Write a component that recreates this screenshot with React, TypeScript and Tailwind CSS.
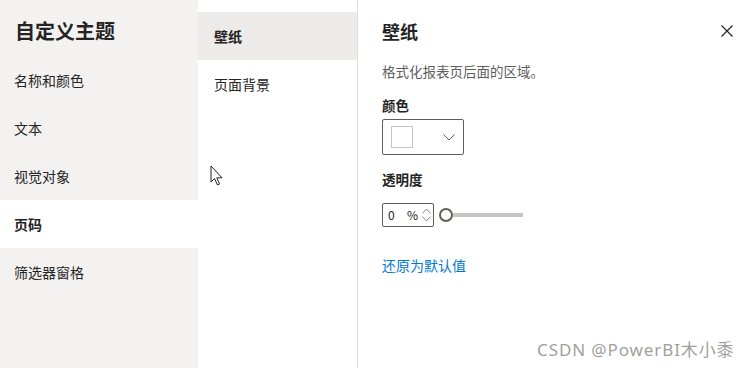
import React from "react";

const font = { fontFamily: '"Noto Sans CJK SC", "Noto Sans", sans-serif' };

export default function App() {
  const items = ["名称和颜色", "文本", "视觉对象", "页码", "筛选器窗格"];
  return (
    <div
      className="relative flex w-[748px] h-[368px] overflow-hidden bg-white text-[#252423]"
      style={font}
    >
      {/* Left nav */}
      <div className="w-[198px] h-full bg-[#f3f2f1] flex flex-col">
        <div className="h-[56px] pt-[6px] pl-[15px] flex items-center text-[20px] font-bold leading-none">
          自定义主题
        </div>
        {items.map((t) => (
          <div
            key={t}
            className={
              "h-[48px] pl-[14px] flex items-center text-[14px] leading-none " +
              (t === "页码" ? "bg-white font-bold" : "")
            }
          >
            {t}
          </div>
        ))}
      </div>

      {/* Middle */}
      <div className="w-[160px] h-full border-r border-[#e1dfdd] pt-[12px] flex flex-col">
        <div className="h-[48px] bg-[#edebe9] pl-[16px] flex items-center text-[14px] font-bold leading-none">
          壁纸
        </div>
        <div className="h-[48px] pl-[16px] flex items-center text-[14px] leading-none">
          页面背景
        </div>
      </div>

      {/* Right */}
      <div className="flex-1 h-full pl-[24px] pr-[15px] flex flex-col">
        <div className="h-[62px] flex items-center justify-between">
          <span className="text-[18px] font-bold leading-none">壁纸</span>
          <svg width="12" height="12" viewBox="0 0 12 12">
            <path d="M0.5 0.5 L11.5 11.5 M11.5 0.5 L0.5 11.5" stroke="#252423" strokeWidth="1.2" />
          </svg>
        </div>
        <div className="h-[18px] leading-[18px] text-[13.5px] text-[#605e5c]">
          格式化报表页后面的区域。
        </div>
        <div className="mt-[15px] h-[20px] leading-[20px] text-[13.5px] font-bold">颜色</div>
        <div className="mt-[4px] w-[82px] h-[36px] border border-[#605e5c] rounded-[2px] flex items-center pl-[8px] pr-[8px] justify-between">
          <div className="w-[22px] h-[22px] border border-[#c8c6c4] bg-white" />
          <svg width="12" height="7" viewBox="0 0 12 7">
            <path d="M0.5 0.5 L6 6 L11.5 0.5" fill="none" stroke="#605e5c" strokeWidth="1" />
          </svg>
        </div>
        <div className="mt-[14px] h-[20px] leading-[20px] text-[13.5px] font-bold">透明度</div>
        <div className="mt-[14px] flex items-center">
          <div className="w-[52px] h-[24px] border border-[#605e5c] rounded-[2px] flex items-center pl-[5px] text-[12px] leading-none">
            <span className="w-[14px]">0</span>
            <span className="ml-[5px]">%</span>
            <div className="ml-[4px] flex flex-col gap-[2px]">
              <svg width="9" height="6" viewBox="0 0 9 6">
                <path d="M0.5 5.5 L4.5 1 L8.5 5.5" fill="none" stroke="#8a8886" strokeWidth="1" />
              </svg>
              <svg width="9" height="6" viewBox="0 0 9 6">
                <path d="M0.5 0.5 L4.5 5 L8.5 0.5" fill="none" stroke="#8a8886" strokeWidth="1" />
              </svg>
            </div>
          </div>
          <div className="ml-[5px] flex items-center">
            <div className="w-[14px] h-[14px] rounded-full border-2 border-[#605e5c] bg-white" />
            <div className="w-[70px] h-[4px] bg-[#c8c6c4]" />
          </div>
        </div>
        <div className="mt-[28px] h-[20px] leading-[20px] text-[14px] text-[#0078d4]">还原为默认值</div>
      </div>

      {/* Mouse cursor */}
      <svg
        className="absolute left-[210px] top-[165px]"
        width="14"
        height="22"
        viewBox="0 0 14 22"
      >
        <path
          d="M1 1 L1 17 L4.5 13.5 L7.5 20 L9.5 19 L6.8 12.8 L12 12.8 Z"
          fill="white"
          stroke="#252423"
          strokeWidth="1"
          strokeLinejoin="miter"
        />
      </svg>

      {/* Watermark */}
      <div
        className="absolute left-[537px] top-[338px] text-[17px] tracking-[0.9px] leading-[24px] text-[#a19f9d] whitespace-nowrap"
        style={{ fontFamily: '"Noto Sans", "Noto Sans CJK SC", sans-serif' }}
      >
        CSDN @PowerBI木小黍
      </div>
    </div>
  );
}
